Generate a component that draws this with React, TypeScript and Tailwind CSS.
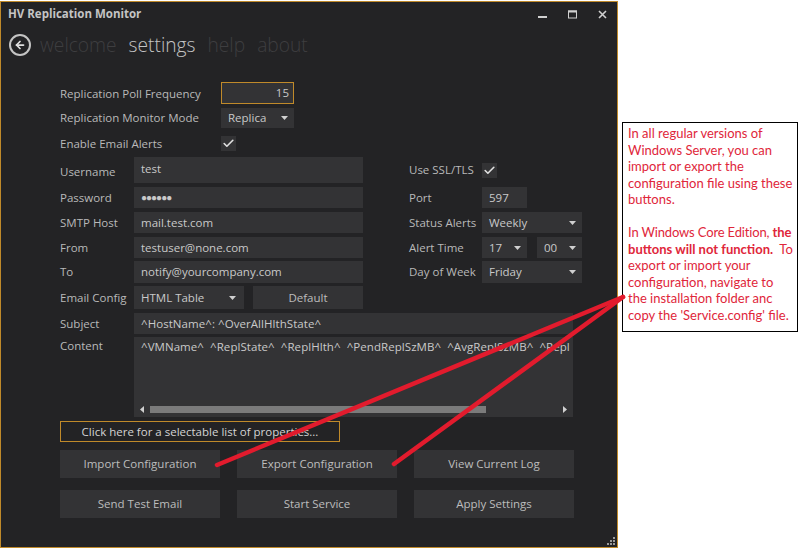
import { ArrowLeft, Check } from 'lucide-react';

const fieldClass = 'bg-[#333335] flex items-center px-[7px] text-[11.5px] text-[#c9c9c9]';

const Caret = () => (
  <svg width="7" height="4" viewBox="0 0 7 4" className="shrink-0">
    <path d="M0 0 H7 L3.5 4 Z" fill="#d0d0d0" />
  </svg>
);

const Field = ({ value, className = '' }: { value: string; className?: string }) => (
  <div className={`${fieldClass} ${className}`}>{value}</div>
);

const Select = ({ value, className = '' }: { value: string; className?: string }) => (
  <div className={`${fieldClass} justify-between pr-[6px] ${className}`}>
    <span>{value}</span>
    <Caret />
  </div>
);

const CheckBox = () => (
  <div className="w-[15px] h-[15px] bg-[#333335] flex items-center justify-center">
    <Check className="w-[13px] h-[13px] text-[#e0e0e0]" strokeWidth={3} />
  </div>
);

const Label = ({ text, className = '' }: { text: string; className?: string }) => (
  <div className={`text-[11.5px] text-[#b9b9b9] shrink-0 ${className}`}>{text}</div>
);

const ActionButton = ({ text }: { text: string }) => (
  <div className="flex-1 h-[28px] bg-[#333335] flex items-center justify-center text-[11.5px] text-[#bdbdbd]">
    {text}
  </div>
);

const leftRows = [
  { label: 'Password', value: '●●●●●●', row: 'h-[21px] mt-[4px]' },
  { label: 'SMTP Host', value: 'mail.test.com', row: 'h-[21px] mt-[4px]' },
  { label: 'From', value: 'testuser@none.com', row: 'h-[21px] mt-[4px]' },
  { label: 'To', value: 'notify@yourcompany.com', row: 'h-[22px] mt-[3px]' },
];

const App = () => {
  return (
    <div className="relative w-[799px] h-[554px] bg-white overflow-hidden font-['Open_Sans',sans-serif] flex items-start">
      <div className="w-[618px] h-[547px] mt-[1px] shrink-0 bg-[#232325] border border-[#c08a2a] flex flex-col">
        {/* title bar */}
        <div className="flex items-center justify-between h-[24px] pl-[7px] pr-[10px] shrink-0">
          <span className="text-[11.5px] font-bold text-[#c4c4c4]">HV Replication Monitor</span>
          <div className="flex items-center gap-[21px]">
            <svg width="9" height="9" viewBox="0 0 9 9" fill="#d0d0d0">
              <rect x="0" y="6" width="9" height="2" />
            </svg>
            <svg width="9" height="9" viewBox="0 0 9 9" fill="none" stroke="#d0d0d0">
              <rect x="0.5" y="1" width="8" height="7" />
              <path d="M0 1.5 H9" strokeWidth="2" />
            </svg>
            <svg width="9" height="9" viewBox="0 0 9 9" fill="none" stroke="#d0d0d0" strokeWidth="1.6">
              <path d="M1 1 L8 8 M8 1 L1 8" />
            </svg>
          </div>
        </div>

        {/* nav */}
        <div className="flex items-center h-[38px] pl-[8px] shrink-0">
          <div className="w-[22px] h-[22px] rounded-full border-2 border-[#c4c4c4] flex items-center justify-center">
            <ArrowLeft className="w-[12px] h-[12px] text-[#e0e0e0]" strokeWidth={3.5} />
          </div>
          <div className="flex items-center gap-[12px] ml-[9px] text-[19.2px] font-light leading-none">
            <span className="text-[#3e3e40]">welcome</span>
            <span className="text-[#c4c4c4]">settings</span>
            <span className="text-[#3e3e40]">help</span>
            <span className="text-[#3e3e40]">about</span>
          </div>
        </div>

        {/* form */}
        <div className="pl-[59px] pt-[18px] flex flex-col">
          <div className="flex items-center h-[22px]">
            <Label text="Replication Poll Frequency" className="w-[161px] pt-[1px]" />
            <div className="w-[73px] h-[22px] bg-[#333335] border border-[#c08a2a] flex items-center justify-end pr-[4px] text-[11.5px] text-[#c9c9c9]">
              15
            </div>
          </div>
          <div className="flex items-center h-[20px] mt-[4px]">
            <Label text="Replication Monitor Mode" className="w-[161px]" />
            <Select value="Replica" className="w-[73px] h-[20px]" />
          </div>
          <div className="flex items-center h-[15px] mt-[8px]">
            <Label text="Enable Email Alerts" className="w-[161px]" />
            <CheckBox />
          </div>

          <div className="flex mt-[6px]">
            <div className="w-[303px] flex flex-col">
              <div className="flex h-[26px]">
                <Label text="Username" className="w-[74px] pt-[6px]" />
                <div className={`${fieldClass} flex-1 !items-start pt-[3px]`}>test</div>
              </div>
              {leftRows.map((item) => (
                <div key={item.label} className={`flex items-center ${item.row}`}>
                  <Label text={item.label} className="w-[74px]" />
                  <Field value={item.value} className={`flex-1 h-full ${item.label === 'Password' ? 'tracking-[-1px] !text-[10px]' : ''}`} />
                </div>
              ))}
              <div className="flex items-center h-[23px] mt-[3px]">
                <Label text="Email Config" className="w-[74px]" />
                <Select value="HTML Table" className="w-[110px] h-full pr-[8px]" />
                <div className="w-[110px] h-full ml-[9px] bg-[#333335] flex items-center justify-center text-[11.5px] text-[#bdbdbd]">
                  Default
                </div>
              </div>
            </div>

            <div className="ml-[46px] w-[173px] flex flex-col">
              <div className="flex items-center h-[26px]">
                <Label text="Use SSL/TLS" className="w-[73px]" />
                <CheckBox />
              </div>
              <div className="flex items-center h-[21px] mt-[4px]">
                <Label text="Port" className="w-[73px]" />
                <Field value="597" className="w-[45px] h-full" />
              </div>
              <div className="flex items-center h-[21px] mt-[4px]">
                <Label text="Status Alerts" className="w-[73px]" />
                <Select value="Weekly" className="w-[100px] h-full" />
              </div>
              <div className="flex items-center h-[21px] mt-[4px]">
                <Label text="Alert Time" className="w-[73px]" />
                <Select value="17" className="w-[45px] h-full" />
                <Select value="00" className="w-[45px] h-full ml-[10px]" />
              </div>
              <div className="flex items-center h-[22px] mt-[3px]">
                <Label text="Day of Week" className="w-[73px]" />
                <Select value="Friday" className="w-[100px] h-full" />
              </div>
            </div>
          </div>

          <div className="flex items-center h-[21px] mt-[4px]">
            <Label text="Subject" className="w-[74px]" />
            <Field value="^HostName^: ^OverAllHlthState^" className="w-[439px] h-full tracking-[0.06px]" />
          </div>
          <div className="flex h-[80px] mt-[3px]">
            <Label text="Content" className="w-[74px]" />
            <div className="w-[439px] h-full bg-[#333335] flex flex-col justify-between overflow-hidden">
              <div className="pl-[7px] pt-[1px] text-[11.5px] tracking-[0.06px] text-[#c9c9c9] whitespace-nowrap">
                ^VMName^&nbsp; ^ReplState^&nbsp; ^ReplHlth^&nbsp; ^PendReplSzMB^&nbsp; ^AvgReplSzMB^&nbsp; ^Repl
              </div>
              <div className="h-[10px] mb-[3px] flex items-center px-[6px]">
                <svg width="4" height="7" viewBox="0 0 4 7" className="shrink-0">
                  <path d="M4 0 V7 L0 3.5 Z" fill="#d0d0d0" />
                </svg>
                <div className="w-[336px] h-[7px] ml-[6px] bg-[#7b7b7b]" />
                <div className="flex-1" />
                <svg width="4" height="7" viewBox="0 0 4 7" className="shrink-0">
                  <path d="M0 0 V7 L4 3.5 Z" fill="#d0d0d0" />
                </svg>
              </div>
            </div>
          </div>

          <div className="w-[280px] h-[21px] mt-[4px] border border-[#c08a2a] flex items-center justify-center text-[11.5px] text-[#d4d4d4]">
            Click here for a selectable list of properties...
          </div>

          <div className="w-[514px] flex gap-[17px] mt-[8px]">
            <ActionButton text="Import Configuration" />
            <ActionButton text="Export Configuration" />
            <ActionButton text="View Current Log" />
          </div>
          <div className="w-[514px] flex gap-[17px] mt-[12px]">
            <ActionButton text="Send Test Email" />
            <ActionButton text="Start Service" />
            <ActionButton text="Apply Settings" />
          </div>
        </div>

        {/* resize grip */}
        <div className="mt-auto self-end mr-[1px] mb-[1px]">
          <svg width="10" height="10" viewBox="0 0 10 10" fill="#9a9a9a">
            <rect x="7" y="1" width="2" height="2" />
            <rect x="4" y="4" width="2" height="2" />
            <rect x="7" y="4" width="2" height="2" />
            <rect x="1" y="7" width="2" height="2" />
            <rect x="4" y="7" width="2" height="2" />
            <rect x="7" y="7" width="2" height="2" />
          </svg>
        </div>
      </div>

      {/* callout */}
      <div className="w-[176px] h-[210px] ml-[4px] mt-[122px] border border-black pl-[5px] pt-[2px] text-[13px] leading-[16.5px] text-[#e0263a] font-['Lato',sans-serif] whitespace-nowrap">
        In all regular versions of
        <br />
        Windows Server, you can
        <br />
        import or export the
        <br />
        configuration file using these
        <br />
        buttons.
        <br />
        <br />
        <span className="tracking-[-0.15px]">
          In Windows Core Edition, <b>the</b>
        </span>
        <br />
        <b>buttons will not function.</b>&nbsp; To
        <br />
        export or import your
        <br />
        configuration, navigate to
        <br />
        the installation folder anc
        <br />
        copy the 'Service.config' file.
      </div>

      {/* annotation arrows over the window */}
      <svg className="absolute inset-0 pointer-events-none" width="799" height="554" viewBox="0 0 799 554">
        <path d="M217 465 L623 297" stroke="#e21b2d" strokeWidth="4.5" strokeLinecap="round" fill="none" />
        <path d="M394 464 L623 297" stroke="#e21b2d" strokeWidth="4.5" strokeLinecap="round" fill="none" />
      </svg>
    </div>
  );
};

export default App;
